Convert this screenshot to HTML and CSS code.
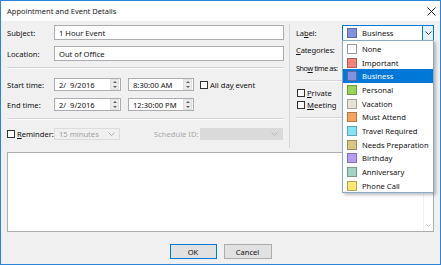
FILE: index.html
```html
<!DOCTYPE html>
<html>
<head>
<meta charset="utf-8">
<link rel="stylesheet" href="styles.css">
</head>
<body>
<div class="window">
  <div class="titlebar">
    <span class="title">Appointment and Event Details</span>
    <svg class="close" width="9" height="9" viewBox="0 0 9 9"><path d="M0.5 0.5L8.5 8.5M8.5 0.5L0.5 8.5" stroke="#222" stroke-width="1"/></svg>
  </div>
  <div class="content">
    <div class="top">
      <div class="left">
        <div class="row r-subject">
          <span class="lbl">Subject:</span>
          <div class="input wide">1 Hour Event</div>
        </div>
        <div class="row r-location">
          <span class="lbl">Location:</span>
          <div class="input wide">Out of Office</div>
        </div>
        <div class="hr h1"></div>
        <div class="row r-start">
          <span class="lbl">Start time:</span>
          <div class="input spin date"><span class="val">2/&nbsp; 9/2016</span><span class="spinner"><i class="up"></i><i class="dn"></i></span></div>
          <div class="input spin time"><span class="val">8:30:00 AM</span><span class="spinner"><i class="up"></i><i class="dn"></i></span></div>
          <span class="check allday"><span class="box"></span><span class="txt">All da<u>y</u> event</span></span>
        </div>
        <div class="row r-end">
          <span class="lbl">End time:</span>
          <div class="input spin date"><span class="val">2/&nbsp; 9/2016</span><span class="spinner"><i class="up"></i><i class="dn"></i></span></div>
          <div class="input spin time"><span class="val">12:30:00 PM</span><span class="spinner"><i class="up"></i><i class="dn"></i></span></div>
        </div>
        <div class="hr h2"></div>
        <div class="row r-reminder">
          <span class="check rem"><span class="box"></span><span class="txt"><u>R</u>eminder:</span></span>
          <div class="combo disabled rem-combo"><span class="val">15 minutes</span><svg class="chev" width="7" height="4" viewBox="0 0 7 4"><path d="M0.5 0.5L3.5 3.5L6.5 0.5" fill="none" stroke="#b0b0b0"/></svg></div>
          <span class="sched-lbl">Schedule ID:</span>
          <div class="combo filled sched-combo"><svg class="chev" width="7" height="4" viewBox="0 0 7 4"><path d="M0.5 0.5L3.5 3.5L6.5 0.5" fill="none" stroke="#b8b8b8"/></svg></div>
        </div>
      </div>
      <div class="vsep"></div>
      <div class="right">
        <div class="row r-label">
          <span class="rlbl">La<u>b</u>el:</span>
          <div class="labelcombo">
            <span class="sw" style="background:#8391df"></span><span class="val">Business</span>
            <span class="dropbtn"><svg width="7" height="4" viewBox="0 0 7 4"><path d="M0.5 0.5L3.5 3.5L6.5 0.5" fill="none" stroke="#444"/></svg></span>
          </div>
        </div>
        <div class="rrow r-cat"><span class="rlbl"><u>C</u>ategories:</span></div>
        <div class="rrow r-show"><span class="rlbl">Sho<u>w</u> time as:</span></div>
        <div class="hr rh1"></div>
        <div class="rrow r-priv"><span class="check"><span class="box"></span><span class="txt"><u>P</u>rivate</span></span></div>
        <div class="rrow r-meet"><span class="check"><span class="box"></span><span class="txt"><u>M</u>eeting</span></span></div>
        <div class="hr rh2"></div>
      </div>
    </div>
    <div class="memo"><div class="scroll"><svg class="chev" width="5" height="3" viewBox="0 0 5 3"><path d="M0.5 0.5L2.5 2.5L4.5 0.5" fill="none" stroke="#c0c0c0"/></svg></div></div>
    <div class="buttons">
      <div class="btn default">OK</div>
      <div class="btn">Cancel</div>
    </div>
  </div>
  <div class="dropdown">
    <div class="item"><span class="sw" style="background:#ffffff"></span>None</div>
    <div class="item"><span class="sw" style="background:#f4837a"></span>Important</div>
    <div class="item sel"><span class="sw" style="background:#8391df"></span>Business</div>
    <div class="item"><span class="sw" style="background:#9ad456"></span>Personal</div>
    <div class="item"><span class="sw" style="background:#e6e4d6"></span>Vacation</div>
    <div class="item"><span class="sw" style="background:#f5a561"></span>Must Attend</div>
    <div class="item"><span class="sw" style="background:#85e3f5"></span>Travel Required</div>
    <div class="item"><span class="sw" style="background:#d8c785"></span>Needs Preparation</div>
    <div class="item"><span class="sw" style="background:#b69cf2"></span>Birthday</div>
    <div class="item"><span class="sw" style="background:#a5d3c5"></span>Anniversary</div>
    <div class="item"><span class="sw" style="background:#fbe671"></span>Phone Call</div>
  </div>
</div>
</body>
</html>
```
FILE: styles.css
```css
* { box-sizing: border-box; }
html, body { margin: 0; padding: 0; }
body {
  font-family: "Noto Sans", "Open Sans", sans-serif;
  font-size: 7.6px;
  color: #111;
  background: #ffffff;
}
u { text-decoration: underline; text-underline-offset: 1px; }
.window {
  position: relative;
  width: 441px;
  height: 265px;
  border: 1px solid #2b84d8;
  background: #f0f0f0;
  display: flex;
  flex-direction: column;
  overflow: hidden;
}
.titlebar {
  height: 20px;
  background: #ffffff;
  display: flex;
  align-items: center;
  justify-content: space-between;
  padding: 0 4px 0 6px;
  flex: none;
}
.title { font-size: 7.5px; color: #222; }
.close { display: block; margin-top: 1px; }
.content {
  flex: 1;
  display: flex;
  flex-direction: column;
  padding: 0 6px 0 6px;
}
.top {
  display: flex;
  align-items: flex-start;
}
.left {
  width: 277px;
  display: flex;
  flex-direction: column;
  padding-top: 4px;
}
.row {
  display: flex;
  align-items: center;
}
.lbl { width: 47px; flex: none; white-space: nowrap; }
.input {
  background: #fff;
  border: 1px solid #abadb3;
  display: flex;
  align-items: center;
  padding-left: 4px;
  white-space: nowrap;
}
.input.wide { width: 230px; height: 15px; }
.r-location { margin-top: 6px; }
.hr { height: 1px; background: #d5d5d5; border-bottom: 1px solid #fcfcfc; box-sizing: content-box; }
.h1 { margin-top: 6px; }
.r-start { margin-top: 9px; }
.r-end { margin-top: 7px; }
.spin { height: 13px; justify-content: space-between; padding-right: 1px; }
.spin.date { width: 67px; }
.spin.time { width: 66px; margin-left: 7px; }
.spinner {
  width: 9px;
  height: 11px;
  display: flex;
  flex-direction: column;
  justify-content: space-between;
  background: #ececec;
  border: 1px solid #e0e0e0;
}
.spinner i {
  display: block;
  width: 0; height: 0;
  margin: 0 auto;
  border-left: 2px solid transparent;
  border-right: 2px solid transparent;
}
.spinner .up { border-bottom: 2px solid #606060; margin-top: 1px; }
.spinner .dn { border-top: 2px solid #606060; margin-bottom: 1px; }
.check { display: flex; align-items: center; white-space: nowrap; }
.box {
  width: 8px; height: 8px;
  border: 1px solid #333;
  background: #fff;
  margin-right: 2px;
  flex: none;
}
.allday { margin-left: 6px; }
.h2 { margin-top: 7px; }
.r-reminder { margin-top: 8px; height: 12px; }
.rem { width: 47px; }
.combo {
  height: 12px;
  display: flex;
  align-items: center;
  justify-content: space-between;
  padding: 0 4px 0 4px;
}
.combo.disabled { width: 66px; background: #f0f0f0; border: 1px solid #dcdcdc; color: #a0a0a0; }
.sched-lbl { color: #a8a8a8; margin-left: 34px; width: 46px; white-space: nowrap; }
.combo.filled { width: 83px; background: #dadada; border: 1px solid #dadada; justify-content: flex-end; }
.chev { display: block; }
.vsep { width: 1px; background: #d5d5d5; height: 124px; margin: 3px 6px 0 5px; flex: none; }
.right {
  width: 138px;
  display: flex;
  flex-direction: column;
  padding-top: 4px;
}
.r-label { height: 16px; }
.rlbl { width: 46px; flex: none; white-space: nowrap; letter-spacing: -0.15px; }
.r-show .rlbl { letter-spacing: -0.45px; font-size: 7.3px; }
.labelcombo {
  width: 92px;
  height: 16px;
  border: 1px solid #0078d7;
  background: #fff;
  display: flex;
  align-items: center;
  padding-left: 4px;
  position: relative;
}
.labelcombo .sw { margin-right: 5px; }
.dropbtn {
  position: absolute;
  right: 0; top: 0; bottom: 0;
  width: 11px;
  background: #e5f1fb;
  border-left: 1px solid #0078d7;
  display: flex;
  align-items: center;
  justify-content: center;
}
.rrow { display: flex; align-items: center; height: 10px; }
.r-cat { margin-top: 4px; }
.r-show { margin-top: 8px; }
.rh1 { margin-top: 7px; }
.r-priv { margin-top: 6px; padding-left: 1px; }
.r-meet { margin-top: 2px; padding-left: 1px; }
.rh2 { margin-top: 7px; }
.memo {
  margin-top: 4px;
  height: 80px;
  width: 427px;
  background: #fff;
  border: 1px solid #abadb3;
  display: flex;
  justify-content: flex-end;
}
.scroll {
  width: 10px;
  border-left: 1px solid #f0f0f0;
  display: flex;
  align-items: flex-end;
  justify-content: center;
  padding-bottom: 4px;
}
.buttons {
  margin-top: 12px;
  display: flex;
  justify-content: center;
  gap: 7px;
}
.btn {
  width: 48px;
  height: 15px;
  background: #e1e1e1;
  border: 1px solid #adadad;
  display: flex;
  align-items: center;
  justify-content: center;
}
.btn.default { border-color: #0078d7; width: 47px; }
.sw {
  display: inline-block;
  width: 10px; height: 10px;
  border: 1px solid rgba(0,0,0,0.28);
  flex: none;
}
.dropdown {
  position: absolute;
  left: 341px;
  top: 39px;
  width: 92px;
  height: 153px;
  background: #fff;
  border: 1px solid #8aa8c8;
  box-shadow: 2px 2px 3px rgba(0,0,0,0.25);
  padding-top: 1px;
}
.item {
  height: 13.7px;
  display: flex;
  align-items: center;
  padding-left: 4px;
  white-space: nowrap;
}
.item .sw { margin-right: 5px; }
.item.sel { background: #0078d7; color: #fff; }
.item:first-child .sw { border-color: #9a9a9a; }
```
